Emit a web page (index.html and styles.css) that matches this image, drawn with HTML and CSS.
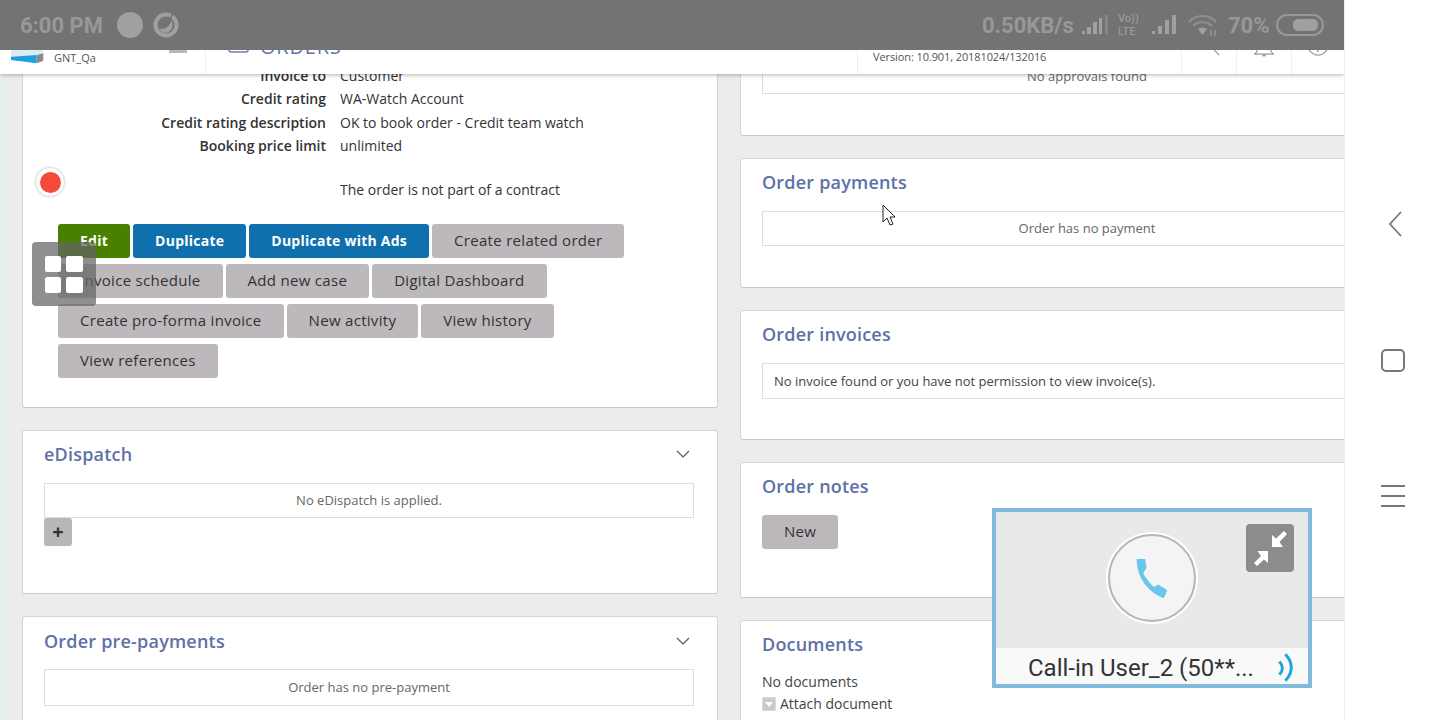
FILE: index.html
```html
<!DOCTYPE html>
<html lang="en">
<head>
<meta charset="utf-8">
<title>Order</title>
<link rel="stylesheet" href="styles.css">
</head>
<body>
<div class="app">
  <main class="phone">
    <div class="status">
      <div class="status-group">
        <span class="clock">6:00 PM</span>
        <span class="dot"></span>
        <svg class="sync" viewBox="0 0 26 26"><circle cx="13" cy="13" r="12.500" fill="#a0a0a0"/><circle cx="13" cy="13" r="8.500" fill="#737373"/><path d="M6.500 16.500C12 18 17 14 18.500 8c2.500 5 .5 11-4.500 12.500-3.500 1-6.500-1-7.500-4z" fill="#a0a0a0"/><path d="M19.500 1.500L17 8" stroke="#737373" stroke-width="1.500"/></svg>
      </div>
      <div class="status-group right">
        <span class="speed">0.50KB/s</span>
        <svg class="bars" viewBox="0 0 27 22"><rect x="1" y="17" width="3" height="3" fill="#a0a0a0"/><rect x="6" y="13" width="4" height="7" fill="#a0a0a0"/><rect x="12" y="8" width="4" height="12" fill="#a0a0a0"/><rect x="18" y="4" width="3" height="16" fill="#a0a0a0"/><rect x="24" y="1" width="3" height="19" fill="#868686"/></svg>
        <span class="volte">Vo))<br>LTE</span>
        <svg class="bars" viewBox="0 0 27 22"><rect x="1" y="17" width="3" height="3" fill="#a0a0a0"/><rect x="7" y="12" width="4" height="8" fill="#a0a0a0"/><rect x="14" y="6" width="4" height="14" fill="#a0a0a0"/><rect x="21" y="1" width="4" height="19" fill="#a0a0a0"/></svg>
        <svg class="wifi" viewBox="0 0 30 22"><g fill="none" stroke="#8f8f8f" stroke-width="2.200"><path d="M1 8c7-8 20-8 27 0"/><path d="M5 12c5-5 14-5 19 0"/></g><path d="M10 15c3-2 6-2 9 0l-4.500 6z" fill="#a0a0a0"/><path d="M23 16v6M27 16v6" stroke="#a0a0a0" stroke-width="1.200"/></svg>
        <span class="pct">70%</span>
        <span class="battery"><span class="battery-fill"></span></span>
      </div>
    </div>

    <header class="topbar">
      <div class="brand">
        <svg class="logo" viewBox="0 0 34 16"><path d="M1 1h32v3.300l-6.300 1.700L1 7.700z" fill="#d8ecf5"/><path d="M1 7.700L26.700 6v8.300L1 11z" fill="#1e9fe3"/><path d="M26.700 6l6.600-1.700v7.400l-6.600 2.600z" fill="#8a8a8a"/></svg>
        <span class="tenant">GNT_Qa</span>
        <span class="burger"></span>
      </div>
      <div class="page-title">
        <svg class="title-icon" viewBox="0 0 21 17"><rect x="1" y="1" width="19" height="15" rx="2" fill="none" stroke="#6b7db8" stroke-width="1.500"/></svg>
        <span class="orders">ORDERS</span>
      </div>
      <div class="version">Version: 10.901, 20181024/132016</div>
      <div class="tool"><svg viewBox="0 0 24 24" class="tool-icon"><circle cx="8" cy="6" r="9" fill="none" stroke="#999" stroke-width="1.300"/><path d="M14 13l9 10" fill="none" stroke="#999" stroke-width="1.300"/></svg></div>
      <div class="tool"><svg viewBox="0 0 24 24" class="tool-icon"><path d="M2 22h20c-2-2-3-3-3-6V8H5v8c0 3-1 4-3 6z" fill="none" stroke="#999" stroke-width="1.300"/><path d="M9 22h6l-3 3z" fill="#999"/></svg></div>
      <div class="tool"><svg viewBox="0 0 24 24" class="tool-icon"><circle cx="12" cy="12" r="11" fill="none" stroke="#999" stroke-width="1.300"/><path d="M12 14v6" stroke="#999" stroke-width="1.500"/></svg></div>
    </header>

    <div class="content">
      <div class="columns">
        <div class="col">
          <section class="card details">
            <div class="row"><span class="label">Invoice to</span><span>Customer</span></div>
            <div class="row"><span class="label">Credit rating</span><span>WA-Watch Account</span></div>
            <div class="row"><span class="label">Credit rating description</span><span>OK to book order - Credit team watch</span></div>
            <div class="row"><span class="label">Booking price limit</span><span>unlimited</span></div>
            <div class="row contract"><span class="label"></span><span>The order is not part of a contract</span></div>
            <div class="actions">
              <a class="btn green">Edit</a>
              <a class="btn blue">Duplicate</a>
              <a class="btn blue">Duplicate with Ads</a>
              <a class="btn">Create related order</a>
              <a class="btn">Invoice schedule</a>
              <a class="btn">Add new case</a>
              <a class="btn">Digital Dashboard</a>
              <a class="btn">Create pro-forma invoice</a>
              <a class="btn">New activity</a>
              <a class="btn">View history</a>
              <a class="btn">View references</a>
            </div>
          </section>

          <section class="card dispatch">
            <div class="card-head"><h2>eDispatch</h2><svg class="chev" viewBox="0 0 14 8"><path d="M1 1l6 6 6-6" fill="none" stroke="#555" stroke-width="1.100"/></svg></div>
            <div class="box">No eDispatch is applied.</div>
            <a class="plus">+</a>
          </section>

          <section class="card prepay">
            <div class="card-head"><h2>Order pre-payments</h2><svg class="chev" viewBox="0 0 14 8"><path d="M1 1l6 6 6-6" fill="none" stroke="#555" stroke-width="1.100"/></svg></div>
            <div class="box">Order has no pre-payment</div>
          </section>
        </div>

        <div class="col">
          <section class="card approvals">
            <div class="box">No approvals found</div>
          </section>
          <section class="card payments">
            <h2>Order payments</h2>
            <div class="box">Order has no payment</div>
          </section>
          <section class="card payments">
            <h2>Order invoices</h2>
            <div class="box left">No invoice found or you have not permission to view invoice(s).</div>
          </section>
          <section class="card notes">
            <h2>Order notes</h2>
            <a class="btn new">New</a>
          </section>
          <section class="card docs">
            <h2>Documents</h2>
            <p class="doc-line">No documents</p>
            <p class="doc-line attach"><span class="check"></span>Attach document</p>
          </section>
        </div>
      </div>
    </div>

    <span class="record"><span class="record-dot"></span></span>
    <div class="apps"><i></i><i></i><i></i><i></i></div>
    <svg class="cursor" viewBox="0 0 14 23"><path d="M1 1v17l4-4 3 7 3-1-3-7h5z" fill="#fff" stroke="#222" stroke-width="1"/></svg>

    <aside class="call">
      <div class="call-stage">
        <div class="call-circle">
          <svg class="phone-icon" viewBox="50 38 98 124"><path d="M52 40L78 40L82 68L72 84C80 100 92 114 105 126L118 118L146 136L135 160C95 145 52 105 52 40z" fill="#66c6ec"/></svg>
        </div>
        <div class="shrink">
          <svg viewBox="0 0 48 48"><path d="M26 23V11l4 3.500L38 7l3 3-7.500 8 3.500 5z" fill="#fff"/><path d="M22 27v12l-4-3.500L11 42l-3-3 7-7-3.500-5z" fill="#fff"/></svg>
        </div>
      </div>
      <div class="call-foot">
        <span class="caller">Call-in User_2 (50**...</span>
        <svg class="sound" viewBox="50 10 60 100"><g fill="none" stroke="#1aa5dc" stroke-width="9"><path d="M60 42C72 55 72 70 60 82"/><path d="M78 20C102 45 102 75 78 100"/></g></svg>
      </div>
    </aside>
  </main>

  <nav class="softkeys">
    <svg class="key-back" viewBox="0 0 16 28"><path d="M14 2L3 14l11 12" fill="none" stroke="#777" stroke-width="1.800"/></svg>
    <span class="key-home"></span>
    <span class="key-menu"><i></i><i></i><i></i></span>
  </nav>
</div>
</body>
</html>
```

FILE: styles.css
```css
* { box-sizing: border-box; }
html, body { margin: 0; height: 100%; overflow: hidden; }
body { font-family: "Open Sans", "Liberation Sans", sans-serif; color: #333; background: #fff; }
h2, p { margin: 0; }

.app { display: flex; width: 1440px; height: 720px; }
.phone { position: relative; width: 1344px; height: 720px; overflow: hidden; display: flex; flex-direction: column; background: #eeebee; }

.softkeys { width: 96px; height: 720px; background: #fff; border-left: 1px solid #eee; display: flex; flex-direction: column; align-items: center; }
.key-back { width: 16px; height: 28px; margin-top: 210px; margin-left: 4px; }
.key-home { width: 24px; height: 23px; border: 2px solid #777; border-radius: 5px; margin-top: 111px; }
.key-menu { display: flex; flex-direction: column; gap: 8px; margin-top: 113px; margin-left: 1px; }
.key-menu i { display: block; width: 24px; height: 2px; background: #777; }

.status { position: absolute; top: 0; left: 0; right: 0; height: 50px; background: #737373; z-index: 5; display: flex; justify-content: space-between; align-items: center; padding: 0 20px; color: #989898; font-family: Roboto, sans-serif; font-weight: 700; font-size: 22px; }
.status-group { display: flex; align-items: center; }
.clock { width: 97px; }
.dot { width: 26px; height: 26px; border-radius: 50%; background: #a0a0a0; }
.sync { width: 26px; height: 26px; margin-left: 10px; }
.speed { width: 99px; }
.bars { width: 27px; height: 22px; }
.volte { font-size: 11px; line-height: 13px; font-weight: 500; width: 24px; margin: 0 9px 0 10px; color: #999; }
.wifi { width: 30px; height: 22px; margin-left: 10px; }
.pct { margin-left: 10px; width: 48px; }
.battery { width: 48px; height: 22px; border: 2px solid #999; border-radius: 11px; padding: 3px 4px 3px 3px; display: flex; justify-content: flex-end; }
.battery-fill { width: 25px; height: 100%; background: #a0a0a0; border-radius: 5px; }

.topbar { height: 74px; flex: none; background: #fff; display: flex; align-items: flex-end; position: relative; z-index: 3; box-shadow: 0 1px 4px rgba(0,0,0,.3); }
.brand { position: relative; width: 206px; height: 74px; border-right: 1px solid #eee; display: flex; align-items: flex-end; padding: 0 0 9px 54px; }
.logo { position: absolute; left: 10px; top: 49px; width: 34px; height: 16px; }
.tenant { font-size: 11px; line-height: 15px; color: #555; }
.burger { position: absolute; left: 169px; top: 50px; width: 18px; height: 3px; background: #b8b8b8; }
.page-title { flex: 1; height: 74px; display: flex; align-items: flex-start; padding: 36px 0 0 22px; }
.title-icon { width: 21px; height: 17px; }
.orders { font-size: 20px; line-height: 22px; letter-spacing: .8px; color: #5f72b5; margin-left: 11px; }
.version { width: 324px; height: 74px; border-left: 1px solid #eee; font-size: 11px; line-height: 15px; color: #555; padding: 49px 0 0 15px; white-space: nowrap; letter-spacing: -.1px; }
.tool { width: 55px; height: 74px; border-left: 1px solid #eee; display: flex; justify-content: center; padding-top: 34px; }
.tool-icon { width: 22px; height: 22px; overflow: visible; }
.tool:last-child { width: 53px; }

.content { flex: 1; min-height: 0; overflow: hidden; border-left: 9px solid #e8f0ef; padding-left: 13px; }
.columns { display: grid; grid-template-columns: 696px 696px; gap: 22px; margin-top: -30px; }
.col { display: flex; flex-direction: column; gap: 23px; }

.card { background: #fff; border: 1px solid #d6d5d7; border-bottom-color: #c9c8ca; border-radius: 3px; padding: 0 23px 0 21px; flex: none; }
h2 { font-size: 18px; line-height: 24px; font-weight: 600; color: #6070a8; letter-spacing: .2px; }
.card-head { display: flex; justify-content: space-between; align-items: center; }
.chev { width: 14px; height: 8px; margin-right: 4px; }

.details { height: 364px; padding-top: 18.500px; }
.row { display: grid; grid-template-columns: 282px 1fr; column-gap: 14px; font-size: 14px; line-height: 23.5px; }
.label { text-align: right; font-weight: 600; }
.contract { margin-top: 20px; }
.actions { display: flex; flex-wrap: wrap; gap: 6px 3px; margin: 23px 0 0 14px; }
.btn { display: block; height: 34px; padding: 0 22px; border-radius: 3px; background: #bcb8bb; color: #333; font-size: 15px; font-weight: 500; line-height: 33px; white-space: nowrap; letter-spacing: .3px; }
.btn.green { background: #4a8000; color: #fff; font-weight: 700; font-size: 14px; letter-spacing: .25px; line-height: 34px; }
.btn.blue { background: #0f70ad; color: #fff; font-weight: 700; font-size: 14px; letter-spacing: .25px; line-height: 34px; }

.box { height: 35px; border: 1px solid #dedede; text-align: center; font-size: 13px; line-height: 33px; color: #666; }
.box.left { text-align: left; padding-left: 11px; color: #444; height: 36px; line-height: 35px; }

.dispatch { height: 164px; padding-top: 11px; margin-top: -1px; }
.dispatch .box { margin-top: 17px; }
.plus { display: block; width: 28px; height: 28px; background: #b9b7b9; border-radius: 3px; text-align: center; font-size: 20px; line-height: 27px; font-weight: 700; }
.prepay { height: 200px; padding-top: 12px; margin-top: -1px; }
.prepay .box { margin-top: 16px; height: 37px; line-height: 35px; }

.approvals { height: 92px; padding-top: 14px; }
.payments { height: 130px; padding-top: 11px; margin-top: -1px; }
.payments .box { margin-top: 17px; }
.notes { height: 136px; padding-top: 11px; margin-top: -1px; }
.new { width: 76px; padding: 0; text-align: center; margin-top: 17px; }
.docs { height: 140px; padding-top: 11px; margin-top: -1px; }
.doc-line { font-size: 14px; line-height: 22px; color: #444; }
.docs h2 { margin-bottom: 15px; }
.attach { display: flex; align-items: center; }
.check { width: 14px; height: 14px; background: #c9c9c9; border: 1px solid #ddd; margin-right: 4px; display: flex; align-items: center; justify-content: center; }
.check::after { content: ""; border: 4px solid transparent; border-top: 5px solid #fff; border-bottom: 0; }

.record { position: absolute; left: 36px; top: 168px; width: 28px; height: 28px; border-radius: 50%; background: #fff; box-shadow: 0 0 3px rgba(0,0,0,.35); display: flex; align-items: center; justify-content: center; z-index: 4; }
.record-dot { width: 21px; height: 21px; border-radius: 50%; background: #f44a3a; }
.apps { position: absolute; left: 32px; top: 242px; width: 64px; height: 64px; border-radius: 4px; background: rgba(100,100,100,.72); display: grid; grid-template-columns: 16px 17px; grid-template-rows: 16px 16px; gap: 5px; padding: 14px 13px; z-index: 4; }
.apps i { background: #fff; border-radius: 2px; }
.cursor { position: absolute; left: 882px; top: 204px; width: 14px; height: 23px; z-index: 4; }

.call { position: absolute; left: 992px; top: 508px; width: 320px; height: 180px; border: 4px solid #7fbcdc; background: #f9f9f9; z-index: 4; display: flex; flex-direction: column; }
.call-stage { position: relative; height: 136px; background: #e9e9e9; display: flex; justify-content: center; align-items: center; }
.call-circle { width: 88px; height: 88px; border-radius: 50%; background: #f4f4f4; border: 2px solid #b5b5b5; box-shadow: 0 0 0 2px #fff; display: flex; align-items: center; justify-content: center; margin-top: -4px; }
.phone-icon { width: 32px; height: 41px; }
.shrink { position: absolute; right: 14px; top: 12px; width: 48px; height: 48px; border-radius: 4px; background: #8c8c8c; }
.shrink svg { display: block; width: 48px; height: 48px; }
.call-foot { flex: 1; display: flex; align-items: center; padding: 4px 0 0 32px; position: relative; }
.caller { font-family: Roboto, sans-serif; font-size: 24px; line-height: 32px; color: #333; white-space: nowrap; }
.sound { position: absolute; left: 280px; top: 3px; width: 20px; height: 33px; }
```
